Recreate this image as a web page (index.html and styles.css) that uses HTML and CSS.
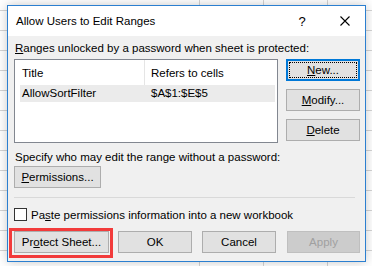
FILE: index.html
```html
<!DOCTYPE html>
<html>
<head>
<meta charset="utf-8">
<link rel="stylesheet" href="styles.css">
</head>
<body>
<div class="dialog">
  <div class="titlebar">
    <span class="title">Allow Users to Edit Ranges</span>
    <span class="help">?</span>
    <svg class="close" width="10" height="10" viewBox="0 0 10 10"><path d="M0.5 0.5 L9.5 9.5 M9.5 0.5 L0.5 9.5" stroke="#000" stroke-width="1.1" fill="none"/></svg>
  </div>
  <div class="content">
    <div class="label first"><u>R</u>anges unlocked by a password when sheet is protected:</div>
    <div class="toprow">
      <div class="listbox">
        <div class="lv-header">
          <div class="hcell c1">Title</div>
          <div class="hcell c2">Refers to cells</div>
        </div>
        <div class="lv-row">
          <div class="rcell r1">AllowSortFilter</div>
          <div class="rcell r2">$A$1:$E$5</div>
        </div>
      </div>
      <div class="sidebtns">
        <button class="btn default"><u>N</u>ew...</button>
        <button class="btn"><u>M</u>odify...</button>
        <button class="btn"><u>D</u>elete</button>
      </div>
    </div>
    <div class="label second">Specify who may edit the range without a password:</div>
    <button class="btn perm"><u>P</u>ermissions...</button>
    <div class="sep"></div>
    <div class="checkrow">
      <span class="checkbox"></span>
      <span class="checklabel">Pa<u>s</u>te permissions information into a new workbook</span>
    </div>
    <div class="bottomrow">
      <button class="btn protect">Pr<u>o</u>tect Sheet...</button>
      <button class="btn ok">OK</button>
      <button class="btn cancel">Cancel</button>
      <button class="btn apply" disabled>Apply</button>
    </div>
  </div>
</div>
</body>
</html>
```

FILE: styles.css
```css
html, body {
  margin: 0;
  padding: 0;
}
body {
  width: 372px;
  height: 266px;
  overflow: hidden;
  background-color: #ffffff;
  background-image:
    linear-gradient(to right, transparent 199px, #d4d4d4 199px, #d4d4d4 200px, transparent 200px),
    linear-gradient(to right, transparent 263px, #d4d4d4 263px, #d4d4d4 264px, transparent 264px),
    linear-gradient(to right, transparent 327px, #d4d4d4 327px, #d4d4d4 328px, transparent 328px),
    linear-gradient(to bottom, transparent 10px, #d4d4d4 10px, #d4d4d4 11px, transparent 11px);
  background-size: 100% 100%, 100% 100%, 100% 100%, 100% 20px;
  font-family: "Liberation Sans", Arial, sans-serif;
  font-size: 11.5px;
  color: #000;
  padding-top: 5px;
  padding-left: 7px;
  box-sizing: border-box;
}
.dialog {
  width: 359px;
  height: 257px;
  box-sizing: border-box;
  border: 1px solid #2b7fd0;
  background: #f0f0f0;
  box-shadow: 0 0 10px rgba(0,0,0,0.22);
  display: flex;
  flex-direction: column;
}
.titlebar {
  height: 30px;
  background: #fff;
  display: flex;
  align-items: center;
  padding-left: 8px;
  padding-right: 15px;
}
.title {
  flex: 1;
  font-size: 11.5px;
}
.help {
  width: 12px;
  text-align: center;
  font-size: 13px;
  margin-right: 32px;
}
.close {
  display: block;
}
.content {
  flex: 1;
  padding: 0 6px;
  display: flex;
  flex-direction: column;
  align-items: flex-start;
}
.label {
  line-height: 16px;
  padding-left: 1px;
  white-space: nowrap;
}
.label.first {
  margin-top: 4px;
}
.toprow {
  display: flex;
  gap: 8px;
  margin-top: 3px;
}
.listbox {
  width: 264px;
  height: 84px;
  box-sizing: border-box;
  border: 1px solid #828790;
  background: #fff;
}
.lv-header {
  display: flex;
  height: 25px;
}
.hcell {
  line-height: 16px;
  padding-top: 5px;
  box-sizing: border-box;
}
.hcell.c1 {
  width: 130px;
  padding-left: 7px;
  border-right: 1px solid #e5e5e5;
}
.hcell.c2 {
  padding-left: 6px;
}
.lv-row {
  display: flex;
  margin-left: 5px;
  width: 255px;
  height: 17px;
  background: #ebebeb;
  line-height: 17px;
}
.rcell.r1 {
  width: 131px;
  padding-left: 2px;
  box-sizing: border-box;
}
.sidebtns {
  display: flex;
  flex-direction: column;
  gap: 8px;
}
.btn {
  font-family: "Liberation Sans", Arial, sans-serif;
  font-size: 11.5px;
  color: #000;
  background: #e1e1e1;
  border: 1px solid #adadad;
  height: 22px;
  width: 74px;
  padding: 0;
  margin: 0;
  line-height: 16px;
  box-sizing: border-box;
}
.btn.default {
  border-color: #0078d7;
  box-shadow: inset 0 0 0 1px #0078d7;
  outline: 1px dotted #000;
  outline-offset: -4px;
}
.label.second {
  margin-top: 6px;
}
.btn.perm {
  width: 87px;
  margin-top: 1px;
}
.sep {
  align-self: stretch;
  height: 1px;
  background: #d9d9d9;
  margin-top: 9px;
  margin-right: 4px;
}
.checkrow {
  display: flex;
  align-items: center;
  height: 13px;
  margin-top: 10px;
}
.checkbox {
  width: 13px;
  height: 13px;
  box-sizing: border-box;
  border: 1px solid #333;
  background: #fff;
}
.checklabel {
  margin-left: 4px;
  line-height: 16px;
  white-space: nowrap;
}
.bottomrow {
  display: flex;
  margin-top: 10px;
}
.btn.protect {
  width: 95px;
  position: relative;
}
.btn.protect::after {
  content: "";
  position: absolute;
  left: -6px;
  top: -4px;
  width: 104px;
  height: 30px;
  box-sizing: border-box;
  border: 3px solid #f23b3b;
}
.btn.ok {
  margin-left: 9px;
}
.btn.cancel {
  margin-left: 10px;
}
.btn.apply {
  margin-left: 11px;
  width: 73px;
  background: #cccccc;
  border-color: #bfbfbf;
  color: #a0a0a0;
}
```
